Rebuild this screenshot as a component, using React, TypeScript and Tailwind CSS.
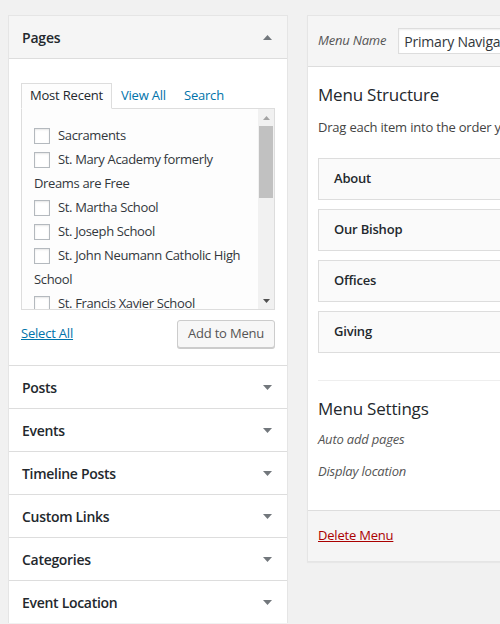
import React from "react";

const Tri = ({ up }: { up?: boolean }) => (
  <svg width="9" height="5" viewBox="0 0 9 5" className="shrink-0">
    <path d={up ? "M0 5 L4.5 0 L9 5Z" : "M0 0 L9 0 L4.5 5Z"} fill="#72777c" />
  </svg>
);

const Box = () => (
  <span className="inline-block w-4 h-4 border border-[#b4b9be] bg-white shadow-[inset_0_1px_2px_rgba(0,0,0,0.1)] align-middle mr-2 -mt-[2px]" />
);

const pages: { label: string; wrap?: string }[] = [
  { label: "Sacraments" },
  { label: "St. Mary Academy formerly", wrap: "Dreams are Free" },
  { label: "St. Martha School" },
  { label: "St. Joseph School" },
  { label: "St. John Neumann Catholic High", wrap: "School" },
  { label: "St. Francis Xavier School" },
];

const sections = ["Posts", "Events", "Timeline Posts", "Custom Links", "Categories", "Event Location"];
const menuItems = ["About", "Our Bishop", "Offices", "Giving"];

export default function App() {
  return (
    <div className="w-[500px] h-[624px] overflow-hidden bg-[#f1f1f1] flex items-start gap-[19px] pl-2 pt-[15px] text-[#23282d] font-['Open_Sans',sans-serif] text-[13px] tracking-[-0.2px]">
      {/* left column: add menu items */}
      <div className="w-[280px] shrink-0 bg-white border border-[#e5e5e5] border-b-0">
        <div className="h-[43px] bg-[#f5f5f5] border-b border-[#ddd] flex items-center justify-between pl-[13px] pr-[15px]">
          <span className="text-[14px] font-semibold">Pages</span>
          <Tri up />
        </div>
        <div className="px-3 pt-[24px] pb-[17px]">
          <div className="flex items-end h-[25px]">
            <div className="h-[26px] -mb-px relative z-10 border border-[#ddd] border-b-[#fdfdfd] bg-[#fdfdfd] px-2 flex items-center">
              Most Recent
            </div>
            <span className="px-[9px] text-[#0073aa] leading-[25px]">View All</span>
            <span className="px-[9px] text-[#0073aa] leading-[25px]">Search</span>
          </div>
          <div className="h-[202px] border border-[#ddd] bg-[#fdfdfd] flex">
            <div className="flex-1 overflow-hidden pl-3 pt-[14px] leading-[24px] whitespace-nowrap text-[#32373c] tracking-[-0.35px]">
              {pages.map((p) => (
                <div key={p.label}>
                  <div>
                    <Box />
                    {p.label}
                  </div>
                  {p.wrap && <div>{p.wrap}</div>}
                </div>
              ))}
            </div>
            <div className="w-[16px] bg-[#f1f1f1] flex flex-col items-center">
              <div className="h-[17px] flex items-center justify-center">
                <svg width="7" height="4" viewBox="0 0 7 4">
                  <path d="M0 4 L3.5 0 L7 4Z" fill="#a3a3a3" />
                </svg>
              </div>
              <div className="w-[14px] h-[72px] bg-[#c1c1c1]" />
              <div className="flex-1" />
              <div className="h-[17px] flex items-center justify-center">
                <svg width="7" height="4" viewBox="0 0 7 4">
                  <path d="M0 0 L7 0 L3.5 4Z" fill="#505050" />
                </svg>
              </div>
            </div>
          </div>
          <div className="mt-[10px] flex items-center justify-between">
            <span className="text-[#0073aa] underline">Select All</span>
            <button className="h-[28px] w-[98px] border border-[#ccc] bg-[#f7f7f7] rounded-[3px] shadow-[0_1px_0_#ccc] text-[#555] text-[13px]">
              Add to Menu
            </button>
          </div>
        </div>
        {sections.map((s) => (
          <div
            key={s}
            className="h-[43px] border-t border-[#ddd] flex items-center justify-between pl-[13px] pr-[15px]"
          >
            <span className="text-[14px] font-semibold tracking-[-0.3px]">{s}</span>
            <Tri />
          </div>
        ))}
      </div>

      {/* right column: menu structure */}
      <div className="w-[420px] shrink-0 bg-white border border-[#e5e5e5] shadow-[0_1px_1px_rgba(0,0,0,0.04)]">
        <div className="h-[51px] bg-[#f5f5f5] border-b border-[#ddd] flex items-center px-[10px] gap-[12px]">
          <span className="italic text-[#555]">Menu Name</span>
          <div className="h-[26px] w-[220px] border border-[#ddd] bg-white shadow-[inset_0_1px_2px_rgba(0,0,0,0.07)] px-[5px] flex items-center text-[14px] text-[#32373c] whitespace-nowrap overflow-hidden">
            Primary Navigation
          </div>
        </div>
        <div className="px-[10px] pt-[18px]">
          <h3 className="text-[17px] leading-[20px] font-medium">Menu Structure</h3>
          <p className="mt-[12px] leading-[20px] text-[#444]">Drag each item into the order you prefer.</p>
          <div className="mt-[21px] flex flex-col gap-[9px]">
            {menuItems.map((m) => (
              <div
                key={m}
                className="h-[42px] border border-[#ddd] bg-[#fafafa] pl-[15px] flex items-center font-semibold"
              >
                {m}
              </div>
            ))}
          </div>
          <div className="mt-[27px] border-t border-[#eee] pt-[18px]">
            <h3 className="text-[17px] leading-[20px] font-medium">Menu Settings</h3>
            <p className="mt-[10px] leading-[20px] italic text-[#555]">Auto add pages</p>
            <p className="mt-[12px] leading-[20px] italic text-[#555]">Display location</p>
          </div>
        </div>
        <div className="mt-[29px] h-[51px] border-t border-[#ddd] bg-[#f5f5f5] flex items-center px-[10px]">
          <span className="text-[#a00] underline">Delete Menu</span>
        </div>
      </div>
    </div>
  );
}
